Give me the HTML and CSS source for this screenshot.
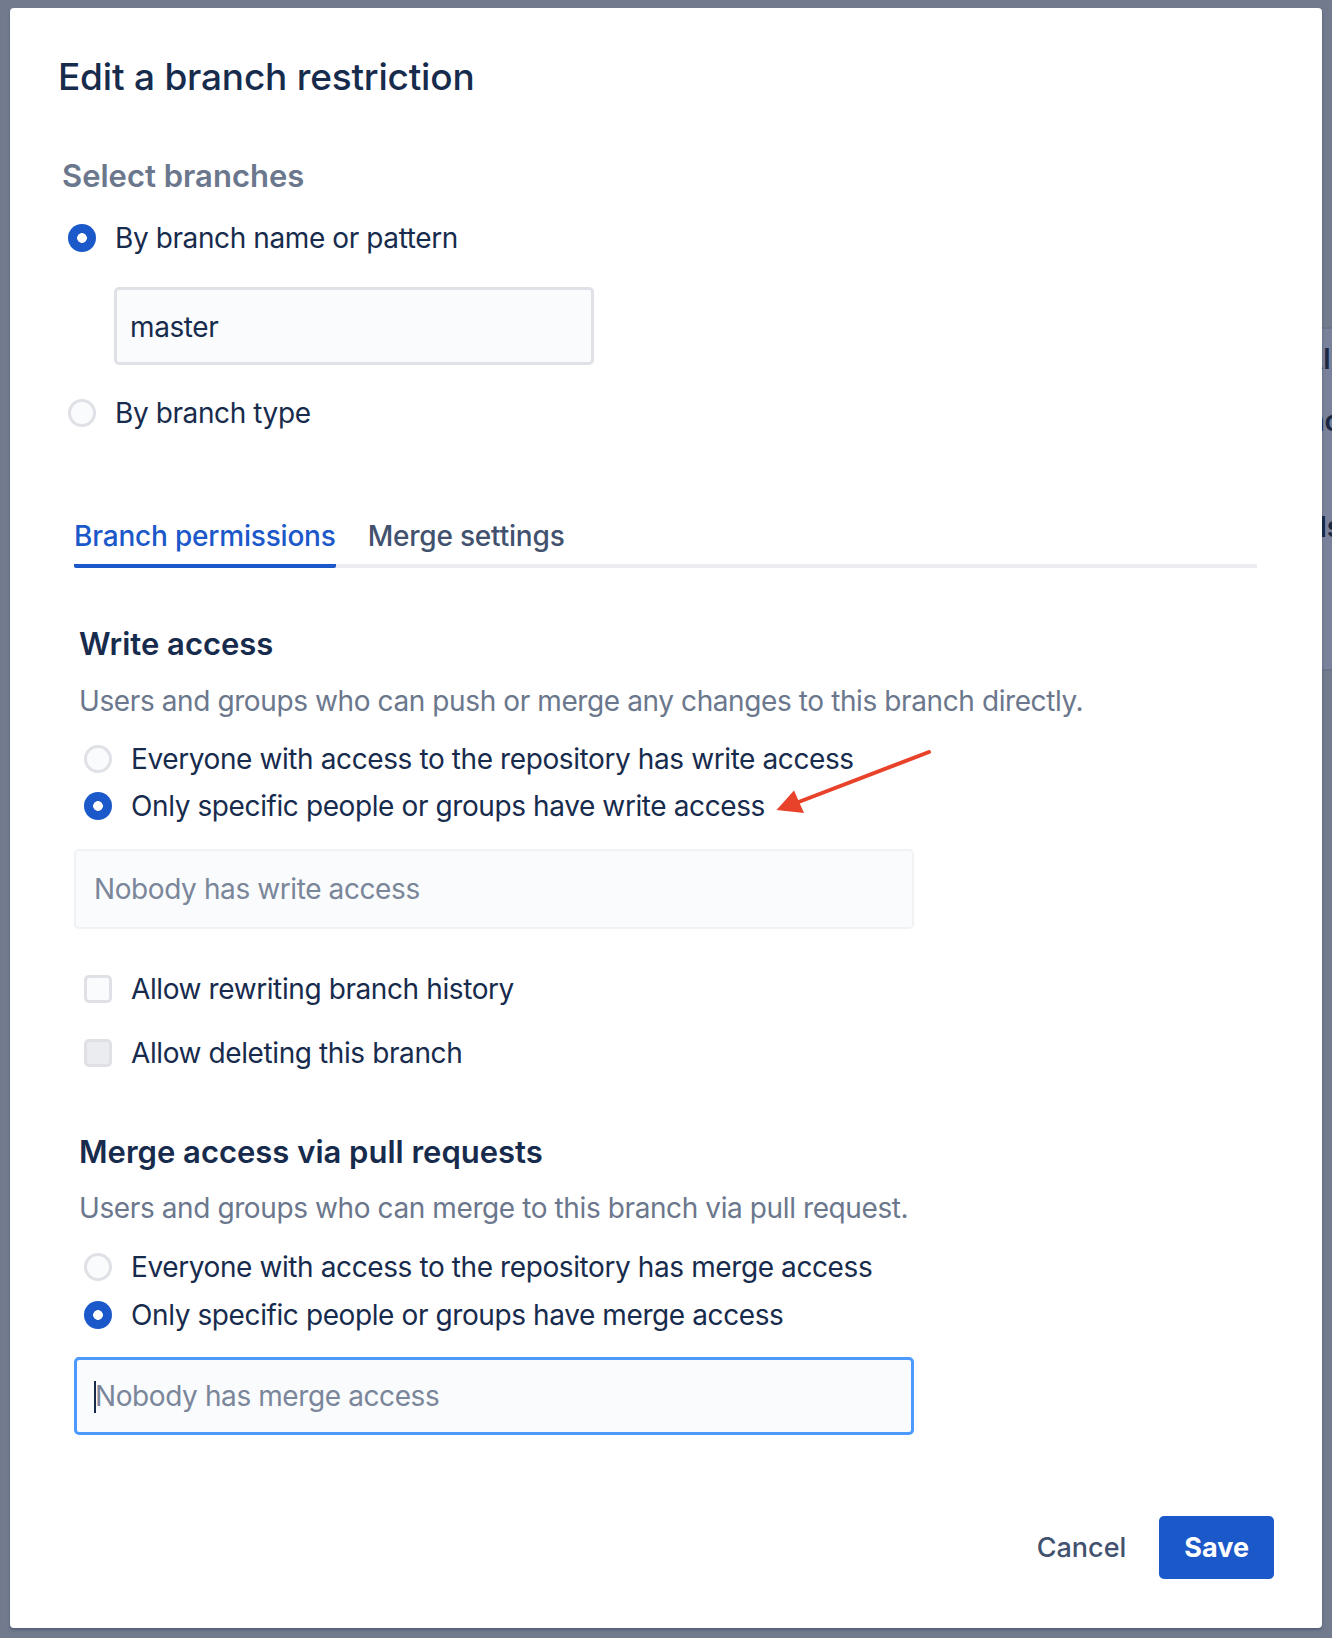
FILE: index.html
```html
<!DOCTYPE html>
<html lang="en">
<head>
<meta charset="utf-8">
<title>Edit a branch restriction</title>
<link rel="stylesheet" href="styles.css">
</head>
<body>
<div class="page-behind">
  <div class="pb-line pb-1">All</div>
  <div class="pb-line pb-2">Branc</div>
  <div class="pb-line pb-3">Pulls</div>
</div>

<div class="modal" role="dialog" aria-labelledby="dlg-title">
  <h1 class="modal-title" id="dlg-title">Edit a branch restriction</h1>

  <h2 class="group-title">Select branches</h2>
  <div class="choice choice-first">
    <span class="radio checked"></span><span class="choice-label">By branch name or pattern</span>
  </div>
  <div class="text-input branch-input">master</div>
  <div class="choice choice-type">
    <span class="radio"></span><span class="choice-label">By branch type</span>
  </div>

  <div class="tabs">
    <div class="tab active">Branch permissions</div>
    <div class="tab">Merge settings</div>
  </div>

  <section class="perm perm-write">
    <h3 class="perm-title">Write access</h3>
    <p class="perm-desc">Users and groups who can push or merge any changes to this branch directly.</p>
    <div class="choice perm-choice-1">
      <span class="radio"></span><span class="choice-label">Everyone with access to the repository has write access</span>
    </div>
    <div class="choice perm-choice-2">
      <span class="radio checked"></span><span class="choice-label">Only specific people or groups have write access</span>
    </div>
    <div class="text-input user-input">Nobody has write access</div>
    <div class="choice check-1">
      <span class="checkbox"></span><span class="choice-label">Allow rewriting branch history</span>
    </div>
    <div class="choice check-2">
      <span class="checkbox disabled"></span><span class="choice-label">Allow deleting this branch</span>
    </div>
  </section>

  <section class="perm perm-merge">
    <h3 class="perm-title">Merge access via pull requests</h3>
    <p class="perm-desc">Users and groups who can merge to this branch via pull request.</p>
    <div class="choice perm-choice-1">
      <span class="radio"></span><span class="choice-label">Everyone with access to the repository has merge access</span>
    </div>
    <div class="choice perm-choice-2">
      <span class="radio checked"></span><span class="choice-label">Only specific people or groups have merge access</span>
    </div>
    <div class="text-input user-input focused"><span class="caret"></span>Nobody has merge access</div>
  </section>

  <footer class="modal-footer">
    <button class="btn btn-subtle" type="button">Cancel</button>
    <button class="btn btn-primary" type="button">Save</button>
  </footer>

  <svg class="annotation" width="180" height="85" viewBox="0 0 180 85" aria-hidden="true">
    <line x1="169" y1="12" x2="36" y2="63" stroke="#e8432a" stroke-width="4" stroke-linecap="round"/>
    <polygon points="16.5,70 34,50.5 44,73" fill="#e8432a"/>
  </svg>
</div>
</body>
</html>
```

FILE: styles.css
```css
* {
  box-sizing: border-box;
}

html, body {
  margin: 0;
  padding: 0;
}

body {
  width: 1332px;
  height: 1638px;
  overflow: hidden;
  background: #727b8e;
  font-family: Inter, "Noto Sans", sans-serif;
  color: #172b4d;
  position: relative;
}

/* page dimmed behind the dialog */
.page-behind {
  margin: 327px 0 0 1240px;
  width: 92px;
  height: 344px;
  overflow: hidden;
  background: #79829a;
  border-top: 2px solid #6c7588;
  border-bottom: 2px solid #6c7588;
  color: #1b2844;
  font-size: 28px;
  font-weight: 600;
  white-space: nowrap;
}

.pb-line {
  line-height: 36px;
}

.pb-1 { margin: 12px 0 0 63px; }
.pb-2 { margin: 26px 0 0 22px; }
.pb-3 { margin: 70px 0 0 37px; }

/* dialog */
.modal {
  position: absolute;
  left: 10px;
  top: 8px;
  width: 1312px;
  height: 1620px;
  padding: 47px 48px 0 48px;
  background: #ffffff;
  border-radius: 4px;
  box-shadow: 0 2px 3px rgba(9, 30, 66, 0.3);
}

.modal-title {
  margin: 0;
  font-size: 37px;
  line-height: 44px;
  font-weight: 500;
  color: #172b4d;
  letter-spacing: -0.2px;
}

.group-title {
  margin: 57px 0 0 4px;
  font-size: 31px;
  line-height: 40px;
  font-weight: 600;
  color: #6b778c;
}

.choice {
  display: flex;
  align-items: center;
  gap: 19px;
  height: 36px;
  font-size: 28px;
  line-height: 36px;
  letter-spacing: -0.4px;
  color: #172b4d;
}

.choice-first {
  margin: 24px 0 0 10px;
}

.choice-type {
  margin: 30px 0 0 10px;
}

.radio {
  flex: none;
  width: 28px;
  height: 28px;
  border-radius: 50%;
  border: 3px solid #dfe1e6;
  background: #fafbfc;
}

.radio.checked {
  border: none;
  background: radial-gradient(circle, #ffffff 0 4.5px, #1b58c9 5.2px);
}

.checkbox {
  flex: none;
  width: 28px;
  height: 28px;
  border-radius: 5px;
  border: 3px solid #dfe1e6;
  background: #fafbfc;
}

.checkbox.disabled {
  background: #ebecf0;
}

.text-input {
  font-size: 28px;
  letter-spacing: -0.4px;
  color: #172b4d;
  background: #fafbfc;
  border-radius: 5px;
}

.branch-input {
  margin: 31px 0 0 56px;
  width: 480px;
  height: 78px;
  border: 3px solid #dfe1e6;
  padding: 1px 13px 0;
  line-height: 72px;
}

/* tabs */
.tabs {
  display: flex;
  gap: 32px;
  margin: 88px 17px 0 16px;
  background: linear-gradient(#ebecf0, #ebecf0) left bottom / 100% 4px no-repeat;
}

.tab {
  font-size: 28px;
  line-height: 34px;
  font-weight: 500;
  letter-spacing: -0.2px;
  color: #42526e;
  padding-bottom: 11px;
  border-bottom: 4px solid transparent;
}

.tab.active {
  color: #1b58c9;
  border-bottom-color: #1b58c9;
  border-radius: 2px;
}

/* permission sections */
.perm {
  margin-left: 16px;
}

.perm-title {
  margin: 56px 0 0 5px;
  font-size: 31px;
  line-height: 40px;
  font-weight: 600;
  color: #172b4d;
}

.perm-merge .perm-title {
  margin-top: 61px;
}

.perm-desc {
  margin: 19px 0 0 5px;
  font-size: 28px;
  line-height: 36px;
  letter-spacing: -0.4px;
  color: #6b778c;
}

.perm-merge .perm-desc {
  margin-top: 18px;
}

.perm .choice {
  margin-left: 10px;
}

.perm-choice-1 {
  margin-top: 22px;
}

.perm-merge .perm-choice-1 {
  margin-top: 23px;
}

.perm-choice-2 {
  margin-top: 11px;
}

.perm-merge .perm-choice-2 {
  margin-top: 12px;
}

.user-input {
  margin-top: 25px;
  width: 840px;
  height: 80px;
  border: 2px solid #f1f2f4;
  padding: 0 18px;
  line-height: 76px;
  color: #7a869a;
}

.user-input.focused {
  margin-top: 24px;
  height: 78px;
  border: 3px solid #4c9aff;
  line-height: 72px;
  padding-left: 17px;
}

.caret {
  display: inline-block;
  width: 2px;
  height: 32px;
  background: #172b4d;
  vertical-align: -7px;
  margin-right: -1px;
}

.check-1 {
  margin-top: 42px;
}

.check-2 {
  margin-top: 28px;
}

/* footer */
.modal-footer {
  display: flex;
  justify-content: flex-end;
  align-items: center;
  margin-top: 81px;
}

.btn {
  font-family: inherit;
  border: none;
  height: 63px;
  font-size: 27px;
  border-radius: 5px;
  cursor: pointer;
}

.btn-subtle {
  background: transparent;
  color: #42526e;
  font-weight: 500;
  padding: 0 16px;
  margin-right: 17px;
}

.btn-primary {
  background: #1b58c9;
  color: #ffffff;
  font-weight: 700;
  padding: 0 25px;
}

/* red annotation arrow */
.annotation {
  position: absolute;
  left: 750px;
  top: 732px;
}
```
